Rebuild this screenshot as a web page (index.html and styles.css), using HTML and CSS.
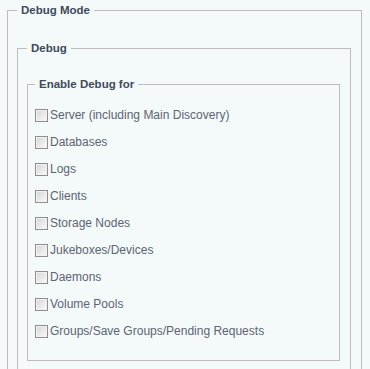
FILE: index.html
```html
<!DOCTYPE html>
<html lang="en">
<head>
  <meta charset="UTF-8">
  <title>Debug Mode</title>
  <link rel="stylesheet" href="styles.css">
</head>
<body>
  <div class="page">
    <fieldset class="group group-outer">
      <legend>Debug Mode</legend>

      <fieldset class="group group-mid">
        <legend>Debug</legend>

        <fieldset class="group group-inner">
          <legend>Enable Debug for</legend>
          <ul class="options">
            <li><label><input type="checkbox"><span>Server (including Main Discovery)</span></label></li>
            <li><label><input type="checkbox"><span>Databases</span></label></li>
            <li><label><input type="checkbox"><span>Logs</span></label></li>
            <li><label><input type="checkbox"><span>Clients</span></label></li>
            <li><label><input type="checkbox"><span>Storage Nodes</span></label></li>
            <li><label><input type="checkbox"><span>Jukeboxes/Devices</span></label></li>
            <li><label><input type="checkbox"><span>Daemons</span></label></li>
            <li><label><input type="checkbox"><span>Volume Pools</span></label></li>
            <li><label><input type="checkbox"><span>Groups/Save Groups/Pending Requests</span></label></li>
          </ul>
        </fieldset>
      </fieldset>
    </fieldset>
  </div>
</body>
</html>
```

FILE: styles.css
```css
*, *::before, *::after { box-sizing: border-box; }
html, body { margin: 0; padding: 0; height: 100%; }
body {
  background: #f4fafa;
  font-family: "Liberation Sans", Arial, sans-serif;
  font-size: 12px;
  color: #5c6473;
  overflow: hidden;
}
.page { padding: 3px 8px 0 7px; }

.group {
  margin: 0;
  border: 1px solid #bdbdbd;
  padding: 23px 10px 0 9px;
  min-width: 0;
}
.group legend {
  padding: 0 4px;
  font-size: 11.5px;
  line-height: 15px;
  font-weight: bold;
  color: #3e4a5c;
}
.group-outer { height: 420px; }
.group-mid { height: 400px; padding-top: 21px; }
.group-inner { padding: 10px 10px 15px 7px; }

.options { list-style: none; margin: 0; padding: 0; }
.options li { height: 27px; display: flex; align-items: center; }
.options label { display: flex; align-items: center; cursor: pointer; }
.options input {
  appearance: none;
  -webkit-appearance: none;
  width: 13px; height: 13px; margin: 0 2px 0 0;
  border: 1px solid #8e8e8e;
  background: linear-gradient(135deg, #d4d4d4, #fbfbfb);
  box-shadow: inset 0 0 0 1px #f2f2f2;
}
.options span { line-height: 15px; }
```
